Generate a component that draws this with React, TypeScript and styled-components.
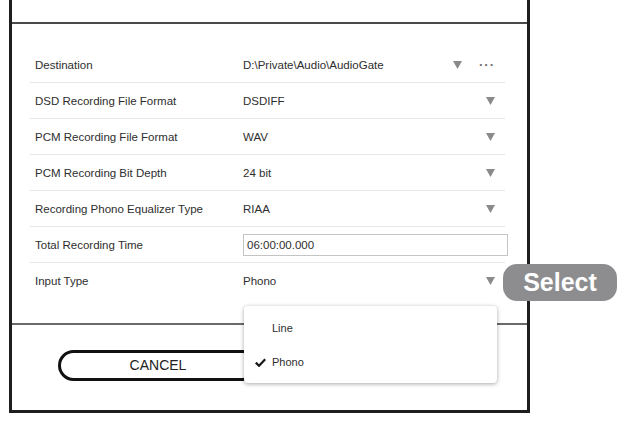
import React from 'react';
import styled, { createGlobalStyle } from 'styled-components';

const GlobalStyle = createGlobalStyle`
  html, body {
    margin: 0;
    padding: 0;
    background: #ffffff;
  }
  body {
    font-family: "Liberation Sans", Arial, sans-serif;
    color: #2a2a2a;
  }
`;

const Page = styled.div`
  position: relative;
  width: 628px;
  height: 426px;
  padding-left: 9px;
  box-sizing: border-box;
  overflow: hidden;
`;

const Panel = styled.div`
  width: 521px;
  box-sizing: border-box;
  border: 3px solid #1e1e1e;
  border-top: none;
  display: flex;
  flex-direction: column;
`;

const Header = styled.div`
  height: 22px;
  border-bottom: 2px solid #4a4a4a;
`;

const Body = styled.div`
  padding: 23px 22px 24px 18px;
  display: flex;
  flex-direction: column;
`;

const Row = styled.div<{ $last?: boolean }>`
  height: 36px;
  box-sizing: border-box;
  display: flex;
  align-items: center;
  border-bottom: ${(p) => (p.$last ? 'none' : '1px solid #e6e6e6')};
  font-size: 11.5px;
`;

const Label = styled.div`
  width: 213px;
  padding-left: 5px;
  box-sizing: border-box;
  color: #2e2e2e;
`;

const Value = styled.div`
  flex: 1;
  color: #2e2e2e;
`;

const Actions = styled.div`
  display: flex;
  align-items: center;
  gap: 17px;
  padding-right: 10px;
`;

const Dots = styled.span`
  color: #6e6e6e;
  font-size: 13px;
  letter-spacing: 1px;
  line-height: 1;
  font-weight: bold;
`;

const TimeInput = styled.div`
  flex: 1;
  margin-right: -3px;
  height: 22px;
  box-sizing: border-box;
  border: 1px solid #c4c4c4;
  padding: 0 3px;
  display: flex;
  align-items: center;
  font-size: 11.5px;
  color: #2e2e2e;
`;

const Footer = styled.div`
  border-top: 2px solid #6a6a6a;
  padding: 25px 0 29px 46px;
`;

const CancelButton = styled.button`
  width: 200px;
  height: 31px;
  border: 3px solid #111;
  border-radius: 16px;
  background: #fff;
  font-family: "Liberation Sans", Arial, sans-serif;
  font-size: 14px;
  color: #222;
  padding: 0 0 2px;
`;

const Menu = styled.div`
  position: absolute;
  left: 244px;
  top: 306px;
  width: 253px;
  height: 77px;
  box-sizing: border-box;
  background: #fff;
  border-radius: 4px;
  box-shadow: 0 1px 4px rgba(0, 0, 0, 0.35);
  padding-top: 5px;
  display: flex;
  flex-direction: column;
`;

const MenuItem = styled.div`
  height: 34px;
  display: flex;
  align-items: center;
  font-size: 11px;
  color: #2e2e2e;
`;

const CheckSlot = styled.span`
  width: 28px;
  display: flex;
  justify-content: center;
  padding-left: 4px;
  box-sizing: border-box;
`;

const Badge = styled.div`
  position: absolute;
  left: 503px;
  top: 264px;
  width: 114px;
  height: 37px;
  border-radius: 14px;
  background: #8d8d8f;
  color: #fff;
  font-family: "Liberation Sans", Arial, sans-serif;
  font-weight: bold;
  font-size: 25px;
  display: flex;
  align-items: center;
  justify-content: center;
`;

const Arrow = () => (
  <svg width="9" height="8" viewBox="0 0 9 8">
    <path d="M0 0 H9 L4.5 8 Z" fill="#8a8a8a" />
  </svg>
);

const Check = () => (
  <svg width="11" height="9" viewBox="0 0 11 9">
    <path d="M0.8 4.6 L4 7.8 L10.2 1.2" fill="none" stroke="#1a1a1a" strokeWidth="2.2" />
  </svg>
);

const rows = [
  { label: 'DSD Recording File Format', value: 'DSDIFF' },
  { label: 'PCM Recording File Format', value: 'WAV' },
  { label: 'PCM Recording Bit Depth', value: '24 bit' },
  { label: 'Recording Phono Equalizer Type', value: 'RIAA' },
];

export default function App() {
  return (
    <>
      <GlobalStyle />
      <Page>
        <Panel>
          <Header />
          <Body>
            <Row>
              <Label>Destination</Label>
              <Value>D:\Private\Audio\AudioGate</Value>
              <Actions>
                <Arrow />
                <Dots>···</Dots>
              </Actions>
            </Row>
            {rows.map((r) => (
              <Row key={r.label}>
                <Label>{r.label}</Label>
                <Value>{r.value}</Value>
                <Actions>
                  <Arrow />
                </Actions>
              </Row>
            ))}
            <Row>
              <Label>Total Recording Time</Label>
              <TimeInput>06:00:00.000</TimeInput>
            </Row>
            <Row $last>
              <Label>Input Type</Label>
              <Value>Phono</Value>
              <Actions>
                <Arrow />
              </Actions>
            </Row>
          </Body>
          <Footer>
            <CancelButton>CANCEL</CancelButton>
          </Footer>
        </Panel>
        <Menu>
          <MenuItem>
            <CheckSlot />
            Line
          </MenuItem>
          <MenuItem>
            <CheckSlot>
              <Check />
            </CheckSlot>
            Phono
          </MenuItem>
        </Menu>
        <Badge>Select</Badge>
      </Page>
    </>
  );
}
